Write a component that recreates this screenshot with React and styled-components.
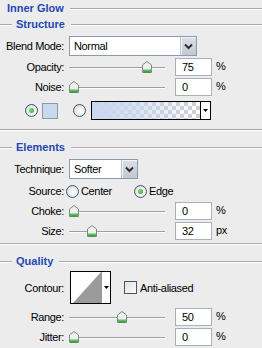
import React from "react";
import styled, { createGlobalStyle } from "styled-components";

const Global = createGlobalStyle`
  html, body {
    margin: 0;
    padding: 0;
    background: #ececec;
  }
  body {
    font-family: "Liberation Sans", Arial, sans-serif;
    font-size: 11px;
    letter-spacing: -0.35px;
    color: #000;
  }
`;

const Panel = styled.div`
  width: 262px;
  height: 348px;
  overflow: hidden;
  background: #ececec;
`;

const Title = styled.div`
  display: flex;
  align-items: center;
  height: 16px;
  padding-left: 7px;
  font-weight: bold;
  color: #2348b4;
  font-size: 11px;
  letter-spacing: 0;
  &::after {
    content: "";
    flex: 1;
    height: 1px;
    background: #a9a9a9;
    margin-left: 6px;
    box-shadow: 0 1px 0 #fff;
  }
`;

const SectionHead = styled.div`
  display: flex;
  align-items: center;
  height: 16px;
  margin-top: ${(p) => p.$mt || 0}px;
  font-weight: bold;
  color: #2348b4;
  font-size: 11px;
  letter-spacing: 0;
  &::before {
    content: "";
    width: 12px;
    height: 1px;
    background: #a9a9a9;
    margin-right: 4px;
    box-shadow: 0 1px 0 #fff;
  }
  &::after {
    content: "";
    flex: 1;
    height: 1px;
    background: #a9a9a9;
    margin-left: 6px;
    box-shadow: 0 1px 0 #fff;
  }
`;

const Separator = styled.div`
  height: 0;
  border-top: 1px solid #a9a9a9;
  border-bottom: 1px solid #fff;
  margin-top: ${(p) => p.$mt || 0}px;
`;

const Row = styled.div`
  display: flex;
  align-items: center;
  height: ${(p) => p.$h || 18}px;
  margin-top: ${(p) => p.$mt || 0}px;
`;

const Label = styled.div`
  width: 64px;
  text-align: right;
  flex-shrink: 0;
  white-space: nowrap;
`;

const Select = styled.div`
  display: flex;
  align-items: stretch;
  margin-left: 5px;
  width: ${(p) => p.$w}px;
  height: 20px;
  box-sizing: border-box;
  border: 1px solid #8a9bb0;
  background: #fff;
`;

const SelectText = styled.div`
  flex: 1;
  display: flex;
  align-items: center;
  padding-left: 4px;
`;

const SelectButton = styled.div`
  width: 15px;
  display: flex;
  align-items: center;
  justify-content: center;
  background: linear-gradient(#dcdfe6, #c3c7d0);
  border-left: 1px solid #b8c2d2;
  box-shadow: inset 1px 1px 0 #f4f6fa;
`;

const SliderWrap = styled.div`
  position: relative;
  width: 101px;
  height: 18px;
  margin-left: 4px;
  flex-shrink: 0;
`;

const Track = styled.div`
  position: absolute;
  left: 1px;
  right: 4px;
  top: 9px;
  height: 1px;
  background: #9e9e9e;
  border-bottom: 1px solid #fdfdfd;
  border-radius: 2px 0 0 2px;
`;

const Thumb = styled.svg`
  position: absolute;
  top: 3px;
  width: 10px;
  height: 12px;
`;

const NumInput = styled.div`
  width: 37px;
  height: 18px;
  box-sizing: border-box;
  margin-left: 6px;
  border: 1px solid #a8b0ba;
  background: #fff;
  padding-left: 6px;
  display: flex;
  align-items: center;
  flex-shrink: 0;
`;

const Unit = styled.div`
  margin-left: 4px;
  margin-top: -3px;
`;

const Radio = styled.span`
  display: inline-block;
  width: 11px;
  height: 11px;
  border-radius: 50%;
  border: 1px solid #3b5772;
  background: radial-gradient(circle at 60% 60%, #ffffff 0%, #e8e8e8 55%, #cfcfcf 100%);
  position: relative;
  flex-shrink: 0;
  &::after {
    content: "";
    display: ${(p) => (p.$on ? "block" : "none")};
    position: absolute;
    left: 3px;
    top: 3px;
    width: 5px;
    height: 5px;
    border-radius: 50%;
    background: radial-gradient(circle at 40% 40%, #7fe07a, #1f9a22);
  }
`;

const ColorRow = styled.div`
  display: flex;
  align-items: center;
  height: 19px;
  margin-top: 5px;
  padding-left: 25px;
`;

const Swatch = styled.div`
  width: 16px;
  height: 16px;
  box-sizing: border-box;
  margin-left: 4px;
  border: 1px solid #8f98a3;
  background: #c9d9f1;
`;

const Gradient = styled.div`
  display: flex;
  margin-left: 5px;
  width: 120px;
  height: 19px;
  box-sizing: border-box;
  border: 1px solid #000;
`;

const GradientFill = styled.div`
  flex: 1;
  border-right: 1px solid #000;
  background:
    linear-gradient(90deg, #c8d8f1 0%, rgba(200, 216, 241, 0.75) 40%, rgba(200, 216, 241, 0) 100%),
    repeating-conic-gradient(#cfcfcf 0% 25%, #ffffff 0% 50%) 0 0 / 8px 8px;
`;

const ArrowCell = styled.div`
  width: 9px;
  background: #fff;
  display: flex;
  align-items: center;
  justify-content: center;
`;

const Option = styled.label`
  display: flex;
  align-items: center;
  gap: 2px;
  margin-left: ${(p) => p.$ml || 0}px;
`;

const ContourBox = styled.div`
  display: flex;
  margin-left: 6px;
  width: 41px;
  height: 33px;
  box-sizing: border-box;
  border: 1px solid #000;
  background: #fff;
`;

const ContourPreview = styled.svg`
  width: 30px;
  height: 31px;
  display: block;
`;

const ContourArrow = styled.div`
  flex: 1;
  border-left: 1px solid #999;
  display: flex;
  align-items: center;
  justify-content: center;
`;

const Check = styled.span`
  display: inline-block;
  width: 11px;
  height: 11px;
  border: 1px solid #3b5772;
  background: linear-gradient(135deg, #e3e3e0, #fbfbfb);
  margin-left: 13px;
  margin-right: 3px;
`;

const Chevron = () => (
  <svg width="9" height="7" viewBox="0 0 9 7">
    <path d="M1 1.5 L4.5 5 L8 1.5" fill="none" stroke="#2b2f3a" strokeWidth="2" />
  </svg>
);

const TinyArrow = () => (
  <svg width="5" height="3" viewBox="0 0 5 3">
    <path d="M0 0 H5 L2.5 3 Z" fill="#000" />
  </svg>
);

const Slider = ({ pos }) => (
  <SliderWrap>
    <Track />
    <Thumb viewBox="0 0 10 12" style={{ left: pos - 5 }}>
      <path d="M5 0.5 L9.5 4 V11.5 H0.5 V4 Z" fill="#eef0ee" stroke="#7f8a85" />
      <path d="M1 8.5 H9 V11 H1 Z" fill="#5bbf5d" />
      <path d="M1.5 11 H8.5" stroke="#2d8b31" />
    </Thumb>
  </SliderWrap>
);

const SliderRow = ({ label, pos, value, unit, mt }) => (
  <Row $mt={mt}>
    <Label>{label}</Label>
    <Slider pos={pos} />
    <NumInput>{value}</NumInput>
    <Unit>{unit}</Unit>
  </Row>
);

export default function App() {
  return (
    <Panel>
      <Global />
      <Title>Inner Glow</Title>
      <SectionHead>Structure</SectionHead>
      <Row $h={20} $mt={4}>
        <Label>Blend Mode:</Label>
        <Select $w={128}>
          <SelectText>Normal</SelectText>
          <SelectButton>
            <Chevron />
          </SelectButton>
        </Select>
      </Row>
      <SliderRow label="Opacity:" pos={79} value="75" unit="%" mt={2} />
      <SliderRow label="Noise:" pos={6} value="0" unit="%" mt={2} />
      <ColorRow>
        <Radio $on />
        <Swatch />
        <Radio style={{ marginLeft: 15 }} />
        <Gradient>
          <GradientFill />
          <ArrowCell>
            <TinyArrow />
          </ArrowCell>
        </Gradient>
      </ColorRow>
      <Separator $mt={9} />

      <SectionHead $mt={8}>Elements</SectionHead>
      <Row $h={20} $mt={4}>
        <Label>Technique:</Label>
        <Select $w={69}>
          <SelectText>Softer</SelectText>
          <SelectButton>
            <Chevron />
          </SelectButton>
        </Select>
      </Row>
      <Row $mt={3}>
        <Label>Source:</Label>
        <Option $ml={2}>
          <Radio />
          Center
        </Option>
        <Option $ml={22}>
          <Radio $on />
          Edge
        </Option>
      </Row>
      <SliderRow label="Choke:" pos={6} value="0" unit="%" mt={2} />
      <SliderRow label="Size:" pos={24} value="32" unit="px" mt={2} />
      <Separator $mt={3} />

      <SectionHead $mt={8}>Quality</SectionHead>
      <Row $h={33} $mt={2}>
        <Label>Contour:</Label>
        <ContourBox>
          <ContourPreview viewBox="0 0 30 31">
            <path d="M2 31 L30 0 V31 Z" fill="#9b9b9b" />
          </ContourPreview>
          <ContourArrow>
            <TinyArrow />
          </ContourArrow>
        </ContourBox>
        <Check />
        Anti-aliased
      </Row>
      <SliderRow label="Range:" pos={54} value="50" unit="%" mt={4} />
      <SliderRow label="Jitter:" pos={6} value="0" unit="%" mt={2} />
    </Panel>
  );
}
